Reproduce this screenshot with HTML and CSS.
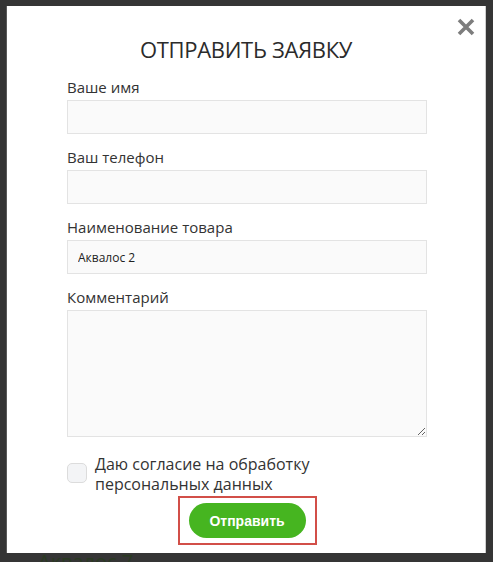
FILE: index.html
```html
<!DOCTYPE html>
<html lang="ru">
<head>
<meta charset="utf-8">
<title>Отправить заявку</title>
<link rel="stylesheet" href="styles.css">
</head>
<body>
<div class="backdrop">
  <div class="modal">
    <button class="close" type="button" aria-label="Закрыть">
      <svg width="20" height="20" viewBox="0 0 20 20"><path d="M3 3 L17 17 M17 3 L3 17" stroke="#7d7d7d" stroke-width="3.6" stroke-linecap="butt"/></svg>
    </button>
    <h2 class="title">ОТПРАВИТЬ ЗАЯВКУ</h2>
    <form class="form">
      <label class="field">
        <span class="label">Ваше имя</span>
        <input class="input" type="text">
      </label>
      <label class="field">
        <span class="label">Ваш телефон</span>
        <input class="input" type="text">
      </label>
      <label class="field">
        <span class="label">Наименование товара</span>
        <input class="input" type="text" value="Аквалос 2">
      </label>
      <label class="field">
        <span class="label">Комментарий</span>
        <textarea class="textarea"></textarea>
      </label>
      <label class="agree">
        <span class="box"></span>
        <span class="agree-text">Даю согласие на обработку<br>персональных данных</span>
      </label>
      <div class="submit-row">
        <div class="highlight">
          <button class="submit" type="button">Отправить</button>
        </div>
      </div>
    </form>
  </div>
  <div class="under">Аквалос 7</div>
</div>
</body>
</html>
```
FILE: styles.css
```css
html, body {
  margin: 0;
  padding: 0;
}
body {
  background: #353535;
  font-family: "Open Sans", "Liberation Sans", sans-serif;
  color: #333;
  width: 493px;
  height: 562px;
  overflow: hidden;
}
.backdrop {
  padding: 6px 0 0 7px;
  position: relative;
  height: 556px;
}
.modal {
  position: relative;
  width: 479px;
  height: 547px;
  background: #fff;
  box-sizing: border-box;
  padding: 28px 0 0 60px;
  border-right: 1px solid #cfcfcf;
  box-shadow: -1px 0 0 #5a5a5a;
}
.close {
  position: absolute;
  top: 11px;
  right: 9px;
  width: 20px;
  height: 20px;
  padding: 0;
  border: 0;
  background: none;
}
.close svg { display: block; }
.title {
  margin: 0 0 13px -60px;
  text-align: center;
  font-weight: 400;
  font-size: 22px;
  line-height: 30px;
  color: #2b2b2b;
  letter-spacing: -0.3px;
}
.form {
  width: 360px;
  display: flex;
  flex-direction: column;
  gap: 13px;
}
.field {
  display: flex;
  flex-direction: column;
  gap: 3px;
}
.label {
  font-size: 15px;
  line-height: 20px;
  color: #333;
}
.input, .textarea {
  box-sizing: border-box;
  width: 360px;
  background: #fafafa;
  border: 1px solid #e3e3e3;
  border-radius: 0;
  outline: none;
  font-family: "Open Sans", "Liberation Sans", sans-serif;
  font-size: 12px;
  color: #222;
  margin: 0;
}
.input {
  height: 34px;
  padding: 0 10px;
}
.textarea {
  height: 127px;
  padding: 6px 10px;
  resize: both;
}
.agree {
  display: flex;
  align-items: flex-start;
  gap: 8px;
  margin-top: 4px;
}
.box {
  flex: none;
  width: 18px;
  height: 18px;
  margin-top: 9px;
  border: 1px solid #dcdcdc;
  background: #f3f4f6;
  border-radius: 5px;
}
.agree-text {
  font-size: 16px;
  line-height: 20px;
  color: #333;
}
.submit-row {
  display: flex;
  justify-content: center;
  margin-top: -11px;
}
.highlight {
  border: 2px solid #d24f48;
  padding: 5px 9px;
}
.submit {
  display: block;
  width: 117px;
  height: 35px;
  border: 0;
  border-radius: 18px;
  background: #46b520;
  color: #fff;
  font-family: "Liberation Sans", Arial, sans-serif;
  font-weight: 700;
  font-size: 14px;
  padding: 0;
}
.under {
  position: absolute;
  left: 38px;
  top: 550px;
  font-family: "Open Sans", sans-serif;
  font-size: 20px;
  line-height: 24px;
  color: #2a3a22;
}
```
